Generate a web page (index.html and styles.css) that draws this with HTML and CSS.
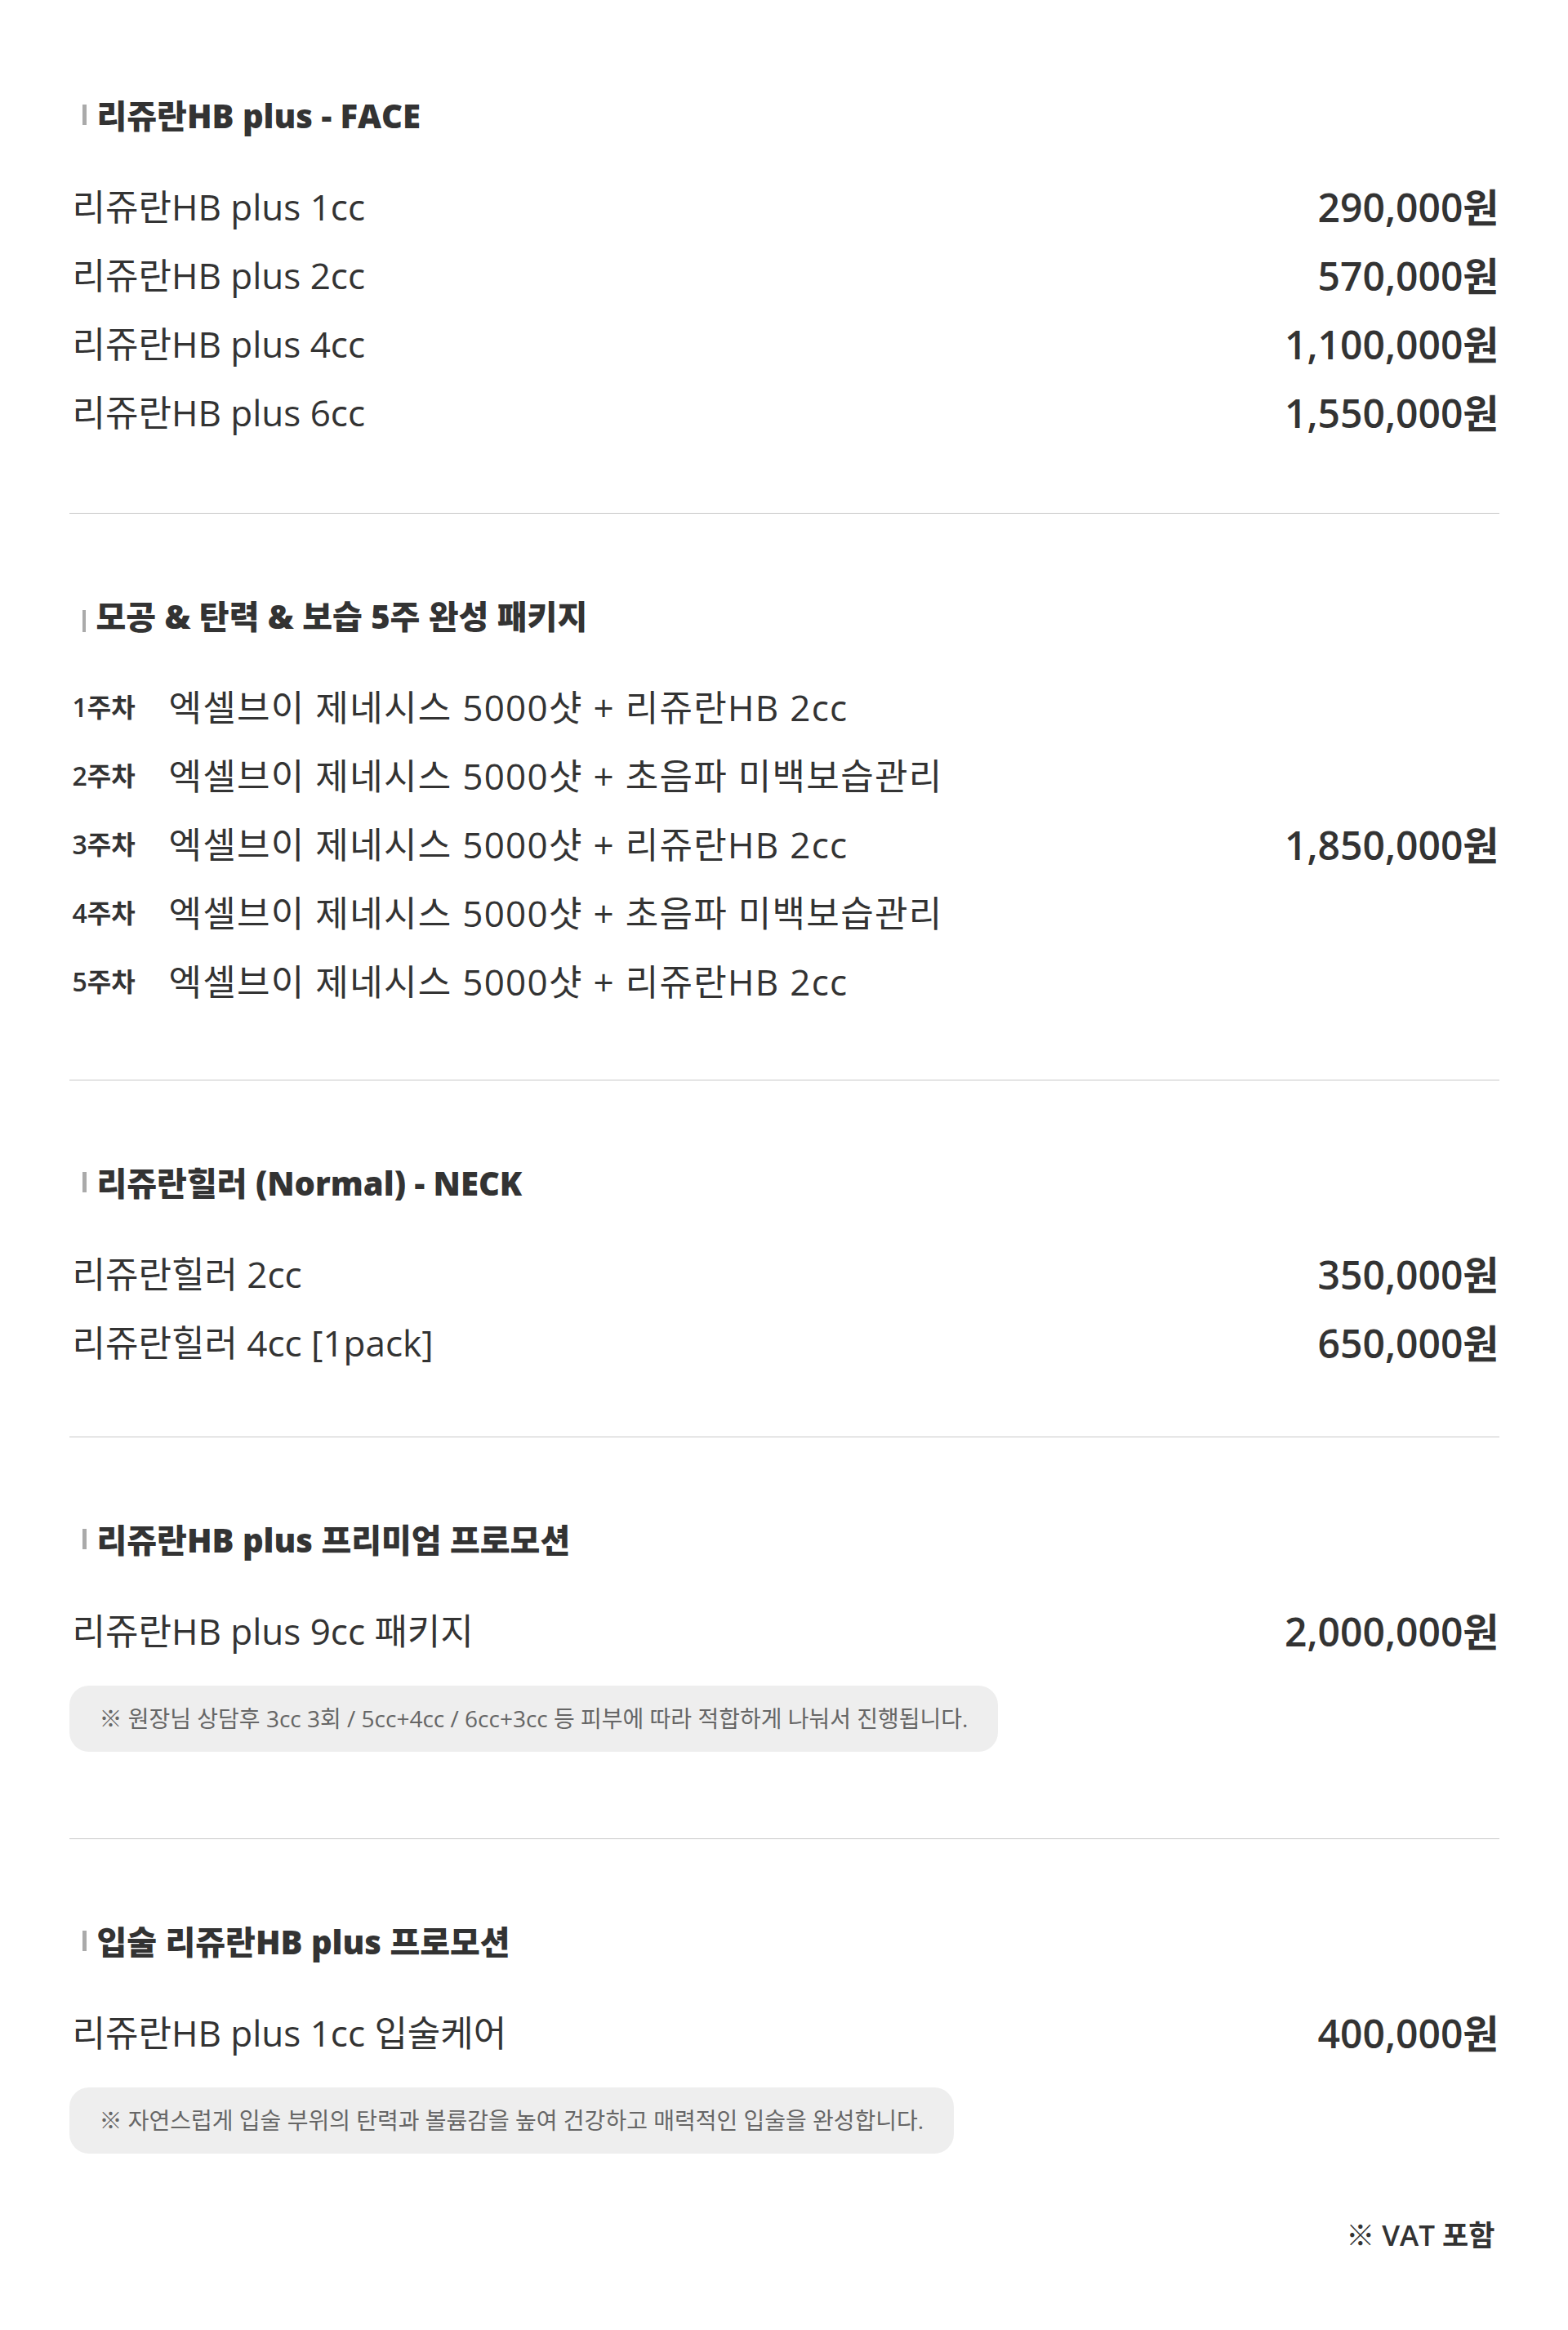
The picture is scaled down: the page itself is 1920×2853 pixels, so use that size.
FILE: index.html
```html
<!DOCTYPE html>
<html>
<head>
    <title>리쥬란 가격표</title>
    <link rel="stylesheet" href="styles.css">
</head>
<body>
    <div class="price-list">
        <section class="group">
            <h2 class="group-title">리쥬란HB plus - FACE</h2>
            <ul class="items">
                <li class="item"><span class="name">리쥬란HB plus 1cc</span><span class="price">290,000원</span></li>
                <li class="item"><span class="name">리쥬란HB plus 2cc</span><span class="price">570,000원</span></li>
                <li class="item"><span class="name">리쥬란HB plus 4cc</span><span class="price">1,100,000원</span></li>
                <li class="item"><span class="name">리쥬란HB plus 6cc</span><span class="price">1,550,000원</span></li>
            </ul>
        </section>

        <section class="group group-package">
            <h2 class="group-title group-title-low">모공 &amp; 탄력 &amp; 보습 5주 완성 패키지</h2>
            <div class="package">
                <ul class="items">
                    <li class="item"><span class="week">1주차</span><span class="name">엑셀브이 제네시스 5000샷 + 리쥬란HB 2cc</span></li>
                    <li class="item"><span class="week">2주차</span><span class="name">엑셀브이 제네시스 5000샷 + 초음파 미백보습관리</span></li>
                    <li class="item"><span class="week">3주차</span><span class="name">엑셀브이 제네시스 5000샷 + 리쥬란HB 2cc</span></li>
                    <li class="item"><span class="week">4주차</span><span class="name">엑셀브이 제네시스 5000샷 + 초음파 미백보습관리</span></li>
                    <li class="item"><span class="week">5주차</span><span class="name">엑셀브이 제네시스 5000샷 + 리쥬란HB 2cc</span></li>
                </ul>
                <span class="price">1,850,000원</span>
            </div>
        </section>

        <section class="group group-short">
            <h2 class="group-title">리쥬란힐러 (Normal) - NECK</h2>
            <ul class="items">
                <li class="item"><span class="name">리쥬란힐러 2cc</span><span class="price">350,000원</span></li>
                <li class="item"><span class="name">리쥬란힐러 4cc [1pack]</span><span class="price">650,000원</span></li>
            </ul>
        </section>

        <section class="group">
            <h2 class="group-title">리쥬란HB plus 프리미엄 프로모션</h2>
            <ul class="items">
                <li class="item"><span class="name">리쥬란HB plus 9cc 패키지</span><span class="price">2,000,000원</span></li>
            </ul>
            <p class="note">※ 원장님 상담후 3cc 3회 / 5cc+4cc / 6cc+3cc 등 피부에 따라 적합하게 나눠서 진행됩니다.</p>
        </section>

        <section class="group">
            <h2 class="group-title">입술 리쥬란HB plus 프로모션</h2>
            <ul class="items">
                <li class="item"><span class="name">리쥬란HB plus 1cc 입술케어</span><span class="price">400,000원</span></li>
            </ul>
            <p class="note">※ 자연스럽게 입술 부위의 탄력과 볼륨감을 높여 건강하고 매력적인 입술을 완성합니다.</p>
        </section>

        <p class="vat">※ VAT 포함</p>
    </div>
</body>
</html>
```

FILE: styles.css
```css
body {
    margin: 0;
    font-family: "Open Sans", "Noto Sans CJK KR", sans-serif;
    background-color: #fff;
    color: #333;
}
.price-list {
    width: 1751px;
    margin: 0 auto;
    padding-bottom: 92px;
}
.group {
    padding: 99px 0 83px;
    border-bottom: 1px solid #c8c8c8;
}
.group:first-child {
    padding-top: 115px;
}
.group-package {
    padding-bottom: 80px;
}
.group-short {
    padding-bottom: 75px;
}
.group:last-of-type {
    padding-bottom: 0;
    border-bottom: none;
}
.group-title {
    display: flex;
    align-items: center;
    margin: 0 0 44px;
    padding-left: 16px;
    height: 50px;
    font-size: 40px;
    font-weight: 800;
}
.group-title::before {
    content: '';
    display: inline-block;
    width: 5px;
    height: 25px;
    margin-right: 13px;
    background: #aaa;
}
.group-title-low::before {
    width: 4px;
    height: 27px;
    margin-top: 14px;
}
.items {
    list-style: none;
    margin: 0;
    padding: 0;
}
.item {
    display: flex;
    justify-content: space-between;
    align-items: center;
    height: 84px;
}
.name {
    font-size: 44px;
    font-weight: 400;
    padding-left: 4px;
}
.price {
    font-size: 48px;
    font-weight: 600;
}
.package {
    display: flex;
    justify-content: space-between;
    align-items: center;
}
.package .item {
    justify-content: flex-start;
}
.week {
    width: 118px;
    padding-left: 4px;
    font-size: 32px;
    font-weight: 600;
}
.package .name {
    padding-left: 0;
    letter-spacing: 1.3px;
}
.note {
    display: inline-block;
    margin: 27px 0 23px;
    padding: 0 37px;
    height: 81px;
    line-height: 81px;
    border-radius: 24px;
    background: #eee;
    color: #666;
    font-size: 28px;
}
.vat {
    margin: 52px 5px 0 0;
    text-align: right;
    line-height: 50px;
    font-size: 35px;
    font-weight: 600;
}
```
